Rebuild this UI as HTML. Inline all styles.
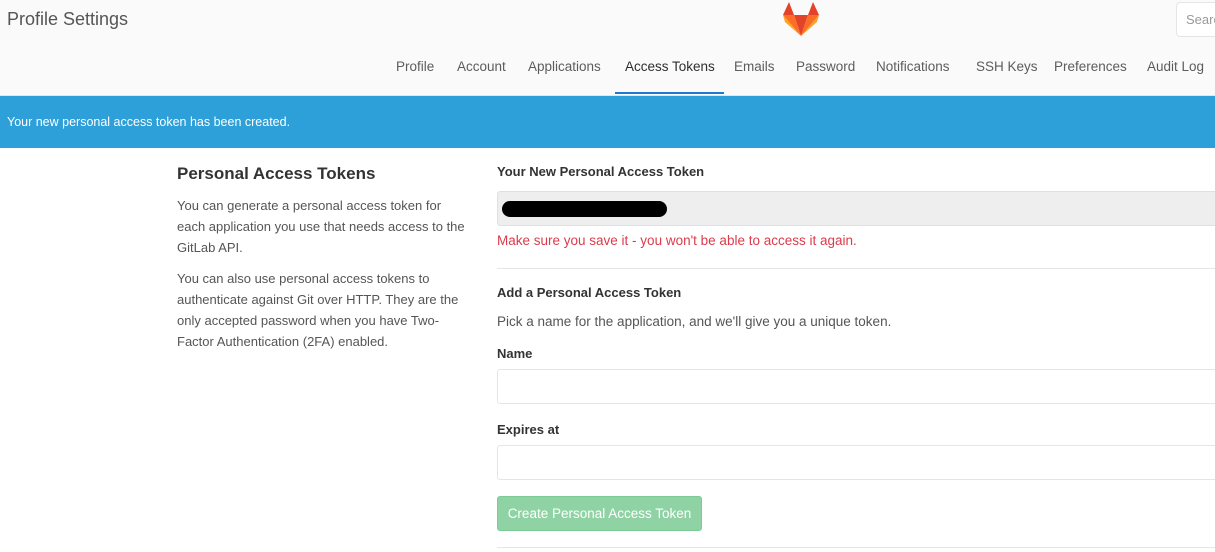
<!DOCTYPE html>
<html><head><style>
*{margin:0;padding:0;box-sizing:border-box}
body{width:1215px;height:552px;overflow:hidden;background:#fff;font-family:"Liberation Sans",sans-serif;color:#2e2e2e;position:relative}
.a{position:absolute;white-space:nowrap}
.hdr{position:absolute;left:0;top:0;width:1215px;height:96px;background:#fafafa;border-bottom:1px solid #e5e5e5}
.nav{font-size:13.5px;color:#5c5c5c;top:59px}
.flash{position:absolute;left:0;top:96px;width:1215px;height:52px;background:#2d9fd9;color:#fff;font-size:12.5px;padding:19px 7px}
.p{font-size:13px;color:#555;line-height:21px;width:290px}
.lbl{font-size:13px;font-weight:bold;color:#333}
.inp{position:absolute;left:497px;width:730px;border:1px solid #e5e5e5;border-radius:3px;background:#fff}
</style></head><body>
<div class="hdr"></div>
<div class="a" style="left:7px;top:9px;font-size:18px;color:#555">Profile Settings</div>
<svg class="a" style="left:783px;top:2px" width="36" height="34" viewBox="0 0 36 34">
<polygon points="18,34 11,13 25,13" fill="#e24329"/>
<polygon points="18,34 0,13 11,13" fill="#fc6d26"/>
<polygon points="0,13 2,20 18,34" fill="#fca326"/>
<polygon points="18,34 36,13 25,13" fill="#fc6d26"/>
<polygon points="36,13 34,20 18,34" fill="#fca326"/>
<polygon points="0,13 6,0 11,13" fill="#e24329"/>
<polygon points="36,13 30,0 25,13" fill="#e24329"/>
</svg>
<div class="a" style="left:1176px;top:2px;width:60px;height:35px;border:1px solid #e5e5e5;border-radius:4px;background:#fff;font-size:13px;color:#999;padding:9px 9px">Search</div>
<div class="a nav" style="left:396px">Profile</div>
<div class="a nav" style="left:457px">Account</div>
<div class="a nav" style="left:528px">Applications</div>
<div class="a nav" style="left:625px;color:#2e2e2e">Access Tokens</div>
<div class="a" style="left:615px;top:92px;width:109px;height:2px;background:#1f78d1"></div>
<div class="a nav" style="left:734px">Emails</div>
<div class="a nav" style="left:796px">Password</div>
<div class="a nav" style="left:876px">Notifications</div>
<div class="a nav" style="left:976px">SSH Keys</div>
<div class="a nav" style="left:1054px">Preferences</div>
<div class="a nav" style="left:1147px">Audit Log</div>
<div class="flash">Your new personal access token has been created.</div>

<div class="a" style="left:177px;top:164px;font-size:17px;font-weight:bold;color:#333">Personal Access Tokens</div>
<div class="a p" style="left:177px;top:195px;white-space:normal">You can generate a personal access token for each application you use that needs access to the GitLab API.</div>
<div class="a p" style="left:177px;top:268px;white-space:normal">You can also use personal access tokens to authenticate against Git over HTTP. They are the only accepted password when you have Two-Factor Authentication (2FA) enabled.</div>

<div class="a lbl" style="left:497px;top:164px">Your New Personal Access Token</div>
<div class="inp" style="top:191px;height:35px;background:#eee;border-color:#e0e0e0"></div>
<div class="a" style="left:502px;top:201px;width:165px;height:16px;background:#000;border-radius:8px"></div>
<div class="a" style="left:497px;top:233px;font-size:13.5px;color:#db3b4b">Make sure you save it - you won't be able to access it again.</div>
<div class="a" style="left:497px;top:268px;width:730px;height:1px;background:#e5e5e5"></div>
<div class="a lbl" style="left:497px;top:285px">Add a Personal Access Token</div>
<div class="a" style="left:497px;top:314px;font-size:13.5px;color:#555">Pick a name for the application, and we'll give you a unique token.</div>
<div class="a lbl" style="left:497px;top:346px">Name</div>
<div class="inp" style="top:369px;height:35px"></div>
<div class="a lbl" style="left:497px;top:422px">Expires at</div>
<div class="inp" style="top:445px;height:35px"></div>
<div class="a" style="left:497px;top:496px;width:205px;height:35px;background:#8fd2a4;border:1px solid #7ccb95;border-radius:3px;color:#fff;font-size:13.5px;text-align:center;line-height:33px">Create Personal Access Token</div>
<div class="a" style="left:497px;top:547px;width:730px;height:1px;background:#e5e5e5"></div>
</body></html>
